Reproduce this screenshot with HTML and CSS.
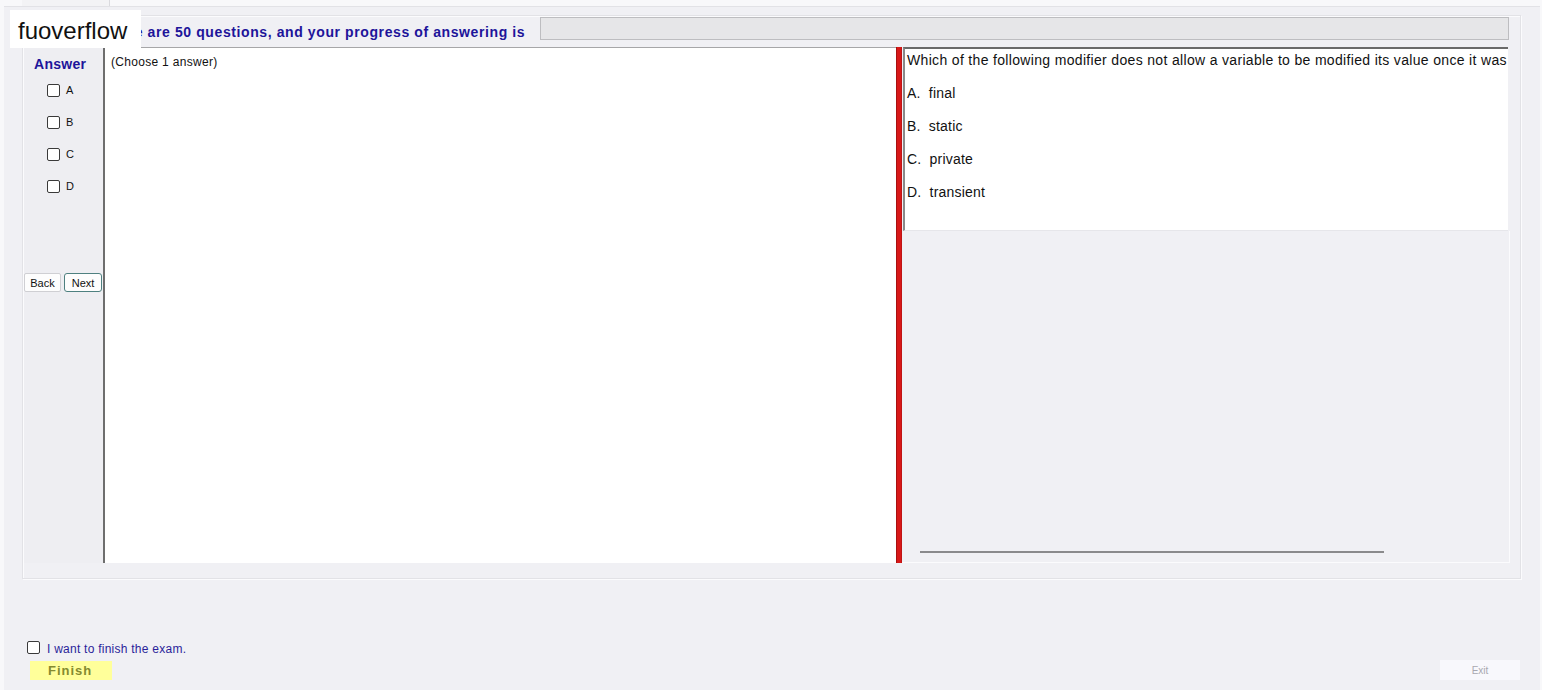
FILE: index.html
```html
<!DOCTYPE html>
<html>
<head>
<meta charset="utf-8">
<title>Exam</title>
<link rel="stylesheet" href="styles.css">
</head>
<body>
<div class="tabstrip"><div class="tab"></div></div>
<div class="window">
  <div class="group">
    <div class="header">
      <span class="intro">There are 50 questions, and your progress of answering is</span>
      <div class="progress"></div>
    </div>
    <div class="content">
      <div class="answers">
        <div class="ans-title">Answer</div>
        <div class="ans-list">
          <label class="ans-row"><input type="checkbox" class="cb"><span>A</span></label>
          <label class="ans-row"><input type="checkbox" class="cb"><span>B</span></label>
          <label class="ans-row"><input type="checkbox" class="cb"><span>C</span></label>
          <label class="ans-row"><input type="checkbox" class="cb"><span>D</span></label>
        </div>
        <div class="nav">
          <button class="btn">Back</button>
          <button class="btn btn-focus">Next</button>
        </div>
      </div>
      <div class="choose">(Choose 1 answer)</div>
      <div class="splitter"></div>
      <div class="right">
        <div class="qbox">
          <div class="qtext">Which of the following modifier does not allow a variable to be modified its value once it was</div>
          <div class="opts">
            <div class="opt">A.&nbsp; final</div>
            <div class="opt">B.&nbsp; static</div>
            <div class="opt">C.&nbsp; private</div>
            <div class="opt">D.&nbsp; transient</div>
          </div>
        </div>
        <div class="lower"><div class="hline"></div></div>
      </div>
    </div>
  </div>
  <div class="footer">
    <label class="finish-check"><input type="checkbox" class="cb"><span>I want to finish the exam.</span></label>
    <div class="footer-row">
      <button class="finish">Finish</button>
      <button class="exit">Exit</button>
    </div>
  </div>
</div>
<div class="watermark">fuoverflow</div>
</body>
</html>
```
FILE: styles.css
```css
* { box-sizing: border-box; }
html, body { margin: 0; padding: 0; }
body {
  width: 1542px;
  height: 690px;
  overflow: hidden;
  position: relative;
  background: #f8f8fa;
  font-family: "Liberation Sans", Arial, sans-serif;
}
.tabstrip { height: 6px; padding-left: 22px; display: flex; }
.tab { width: 88px; height: 6px; background: #f3f3f5; border-right: 1px solid #dadade; }
.window {
  margin-left: 4px;
  width: 1536px;
  height: 684px;
  background: #f0f0f4;
  border-top: 1px solid #e2e2e6;
  padding: 8px 19px 0 18px;
  display: flex;
  flex-direction: column;
}
.group {
  height: 564px;
  border: 1px solid #e2e2e6;
  box-shadow: inset 1px 1px 0 #fbfbfd, 1px 1px 0 #fbfbfd;
  padding: 1px 0 0 1px;
  display: flex;
  flex-direction: column;
}
.header { height: 30px; display: flex; align-items: flex-start; padding-left: 78px; }
.intro {
  font-size: 14px;
  font-weight: bold;
  letter-spacing: 0.6px;
  color: #20149a;
  line-height: 23px;
  padding-top: 4px;
  white-space: nowrap;
}
.progress {
  margin-left: 15px;
  width: 969px;
  height: 23px;
  background: #e6e6e8;
  border: 1px solid #bdbdc0;
}
.content { height: 516px; display: flex; }
.answers { width: 79px; display: flex; flex-direction: column; background: #eeeef2; }
.ans-title {
  margin-top: 9px;
  line-height: 16px;
  padding-left: 10px;
  font-size: 14px;
  font-weight: bold;
  letter-spacing: 0.3px;
  color: #20149a;
}
.ans-list { margin-top: 2px; display: flex; flex-direction: column; }
.ans-row {
  height: 32px;
  display: flex;
  align-items: center;
  padding-left: 23px;
  gap: 6px;
  font-size: 11px;
  color: #111;
}
.cb {
  appearance: none;
  -webkit-appearance: none;
  margin: 0;
  width: 13px;
  height: 13px;
  border: 1px solid #3a3a3a;
  border-radius: 2px;
  background: #fff;
}
.nav { margin-top: 71px; display: flex; gap: 3px; }
.btn {
  height: 19px;
  width: 37px;
  padding: 0;
  font-family: "Liberation Sans", Arial, sans-serif;
  font-size: 11px;
  color: #111;
  background: #fdfdfd;
  border: 1px solid #cfcfd3;
  border-radius: 2px;
}
.btn-focus { width: 38px; border-color: #4e8080; border-radius: 3px; }
.choose {
  width: 793px;
  background: #fff;
  border-left: 2px solid #6e6e6e;
  border-top: 1px solid #a6a6a8;
  padding: 7px 0 0 6px;
  font-size: 12px;
  letter-spacing: 0.3px;
  line-height: 14px;
  color: #111;
}
.splitter {
  width: 6px;
  background: #d81818;
  border-left: 1px solid #a81010;
  border-right: 1px solid #c01414;
}
.right { width: 608px; display: flex; flex-direction: column; }
.qbox {
  height: 184px;
  margin-left: 1px;
  width: 605px;
  background: #fff;
  border-top: 2px solid #6a6a6a;
  border-left: 2px solid #8a8a8a;
  border-bottom: 1px solid #e6e6ea;
  padding: 1px 0 0 2px;
  font-size: 14px;
  color: #111;
}
.qtext { line-height: 20px; white-space: nowrap; letter-spacing: 0.33px; }
.opts { margin-top: 7px; }
.opt { line-height: 33px; letter-spacing: 0.2px; }
.lower {
  flex: 1;
  display: flex;
  align-items: flex-end;
  padding: 0 0 9px 18px;
  border-right: 1px solid #fbfbfd;
  border-bottom: 1px solid #fbfbfd;
}
.hline { width: 464px; height: 2px; background: #8a8a8c; }
.footer { margin-top: 61px; display: flex; flex-direction: column; }
.finish-check {
  margin-left: 5px;
  display: flex;
  align-items: center;
  gap: 7px;
  height: 14px;
  font-size: 12px;
  color: #2b1f9a;
}
.finish-check span { padding-top: 3px; letter-spacing: 0.25px; }
.footer-row { margin-top: 6px; display: flex; justify-content: space-between; align-items: flex-start; }
.finish {
  margin-left: 8px;
  margin-top: 1px;
  width: 82px;
  height: 19px;
  border: none;
  background: #ffff9a;
  font-family: "Liberation Sans", Arial, sans-serif;
  font-weight: bold;
  font-size: 13px;
  letter-spacing: 1px;
  color: #848a30;
  text-align: left;
  padding: 0 0 0 18px;
}
.exit {
  width: 80px;
  height: 20px;
  margin-right: 1px;
  padding: 0;
  border: none;
  background: #f8f8fc;
  font-family: "Liberation Sans", Arial, sans-serif;
  font-size: 10px;
  color: #a8a8b0;
}
.watermark {
  position: absolute;
  left: 10px;
  top: 10px;
  width: 131px;
  height: 38px;
  background: #fff;
  padding-left: 8px;
  font-size: 24px;
  line-height: 42px;
  color: #111;
}
```
